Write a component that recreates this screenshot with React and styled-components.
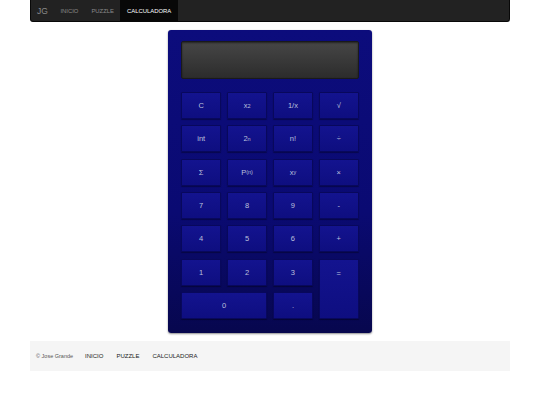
import React from 'react'
import styled, { createGlobalStyle } from 'styled-components'

const GlobalStyle = createGlobalStyle`
  body {
    margin: 0;
    background: #fff;
    font-family: "Liberation Sans", Arial, sans-serif;
  }
`

const keys = [
  { label: 'C' },
  { label: 'x', sup: '2' },
  { label: '1/x' },
  { label: '√' },
  { label: 'int' },
  { label: '2', sup: 'n' },
  { label: 'n!' },
  { label: '÷' },
  { label: 'Σ' },
  { label: 'P', sub: '(n)' },
  { label: 'x', sup: 'y' },
  { label: '×' },
  { label: '7' },
  { label: '8' },
  { label: '9' },
  { label: '-' },
  { label: '4' },
  { label: '5' },
  { label: '6' },
  { label: '+' },
  { label: '1' },
  { label: '2' },
  { label: '3' },
  { label: '=', tall: true },
  { label: '0', wide: true },
  { label: '.' },
]

const links = ['INICIO', 'PUZZLE', 'CALCULADORA']

const App = () => {
  return (
    <Page>
      <GlobalStyle />

      <Navbar>
        <Brand>JG</Brand>
        {links.map((link) => (
          <NavLink key={link} $active={link === 'CALCULADORA'}>{link}</NavLink>
        ))}
      </Navbar>

      <Main>
        <Calculator>
          <Display />
          <Keypad>
            {keys.map((key, index) => (
              <Key key={index} $wide={key.wide} $tall={key.tall}>
                {key.label}
                {key.sup ? <sup>{key.sup}</sup> : null}
                {key.sub ? <sub>{key.sub}</sub> : null}
              </Key>
            ))}
          </Keypad>
        </Calculator>
      </Main>

      <Footer>
        <Copy>© Jose Grande</Copy>
        {links.map((link) => (
          <FooterLink key={link}>{link}</FooterLink>
        ))}
      </Footer>
    </Page>
  )
}

export default App

const Page = styled.div`
width: 480px;
margin: 0 auto;
`

const Navbar = styled.nav`
display: flex;
align-items: stretch;
height: 22px;
background: #222;
border: 1px solid #080808;
border-top: none;
border-radius: 0 0 3px 3px;
box-sizing: border-box;
padding-left: 6px;
`

const Brand = styled.span`
display: flex;
align-items: center;
font-size: 8.5px;
color: #8a8a8a;
padding-right: 6px;
`

const NavLink = styled.span`
display: flex;
align-items: center;
font-size: 5.9px;
padding: 0 6.5px;
color: ${(p) => (p.$active ? '#fff' : '#8a8a8a')};
background: ${(p) => (p.$active ? '#080808' : 'transparent')};
`

const Main = styled.div`
display: flex;
justify-content: center;
padding: 8px 0;
`

const Calculator = styled.div`
width: 204px;
box-sizing: border-box;
padding: 11px 13px 14px;
border-radius: 3px;
background: linear-gradient(to bottom, #0c0c7c 0%, #0a0a72 60%, #07074e 100%);
box-shadow: 0 1px 2px rgba(0, 0, 0, 0.45);
`

const Display = styled.div`
height: 38px;
border-radius: 2px;
background: linear-gradient(to bottom, #464646, #2c2c2c);
border: 1px solid #1a1a1a;
box-sizing: border-box;
box-shadow: inset 0 1px 2px rgba(0, 0, 0, 0.5);
margin-bottom: 13px;
`

const Keypad = styled.div`
display: grid;
grid-template-columns: repeat(4, 1fr);
grid-auto-rows: 27px;
column-gap: 5.5px;
row-gap: 6.33px;
`

const Key = styled.div`
display: flex;
align-items: ${(p) => (p.$tall ? 'flex-start' : 'center')};
justify-content: center;
padding-top: ${(p) => (p.$tall ? '9px' : '0')};
box-sizing: border-box;
grid-column: ${(p) => (p.$wide ? 'span 2' : 'auto')};
grid-row: ${(p) => (p.$tall ? 'span 2' : 'auto')};
background: linear-gradient(to bottom, #13138f, #0e0e80);
border: 1px solid #08085c;
border-radius: 1px;
box-shadow: 0 1px 1px rgba(0, 0, 0, 0.35);
color: #bcc0dc;
font-size: 7.5px;

  sup { font-size: 5.5px; vertical-align: 3px; }
  sub { font-size: 5.5px; vertical-align: -1.5px; }
`

const Footer = styled.footer`
display: flex;
align-items: center;
height: 30px;
background: #f5f5f5;
padding-left: 6px;
`

const Copy = styled.span`
font-size: 5.5px;
color: #555;
margin-right: 12px;
`

const FooterLink = styled.span`
font-size: 6px;
color: #222;
margin-right: 13px;
`
